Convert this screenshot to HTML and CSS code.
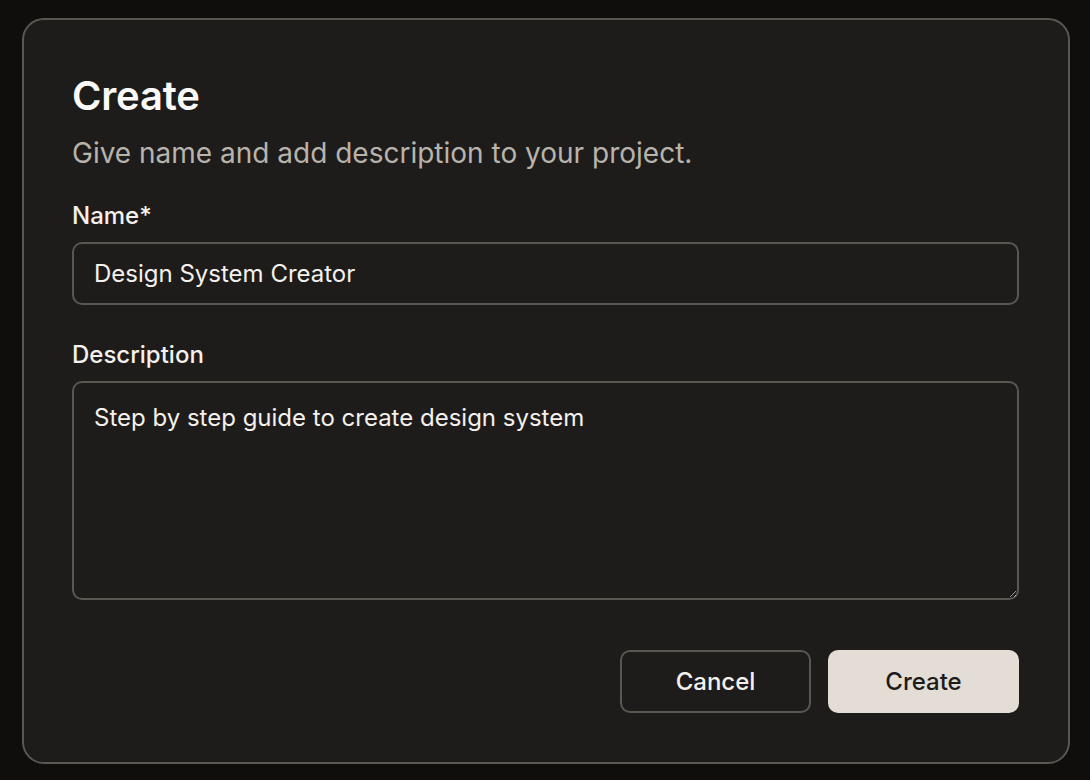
FILE: index.html
```html
<!DOCTYPE html>
<html>
<head lang="en">
    <meta charset="UTF-8">
    <title>Create</title>
    <link rel="stylesheet" href="styles.css">
</head>
<body>
<div class="dialog">
    <h1 class="title">Create</h1>
    <p class="subtitle">Give name and add description to your project.</p>

    <label class="field">
        <span class="label">Name*</span>
        <input class="input" type="text" value="Design System Creator">
    </label>

    <label class="field">
        <span class="label">Description</span>
        <textarea class="input area">Step by step guide to create design system</textarea>
    </label>

    <div class="actions">
        <button class="btn btn-ghost">Cancel</button>
        <button class="btn btn-main">Create</button>
    </div>
</div>
</body>
</html>
```

FILE: styles.css
```css
* {
    margin: 0;
    padding: 0;
    box-sizing: border-box;
}

body {
    background: #0f0e0d;
    font-family: Inter, "Noto Sans", sans-serif;
    color: #f4f1ec;
    padding: 18px 20px 16px 22px;
}

.dialog {
    width: 1048px;
    height: 746px;
    background: #1d1c1b;
    border: 2px solid #5a5650;
    border-radius: 22px;
    padding: 52px 49px 49px 48px;
    display: flex;
    flex-direction: column;
}

.title {
    font-size: 40px;
    font-weight: 600;
    line-height: 48px;
    color: #fbfaf8;
    letter-spacing: -0.2px;
}

.subtitle {
    margin-top: 15px;
    font-size: 28px;
    line-height: 36px;
    color: #b8b3ab;
}

.field {
    display: flex;
    flex-direction: column;
    margin-top: 30px;
}

.field + .field {
    margin-top: 35px;
}

.label {
    font-size: 24px;
    font-weight: 500;
    line-height: 30px;
    color: #f4f1ec;
    margin-bottom: 11px;
}

.input {
    width: 100%;
    height: 63px;
    background: #1d1c1b;
    border: 2px solid #5a5650;
    border-radius: 10px;
    padding: 0 20px;
    font-family: Inter, "Noto Sans", sans-serif;
    font-size: 24px;
    color: #f4f1ec;
    outline: none;
}

.area {
    height: 219px;
    padding: 20px 20px;
    line-height: 30px;
    resize: vertical;
}

.actions {
    margin-top: auto;
    display: flex;
    justify-content: flex-end;
    gap: 17px;
}

.btn {
    width: 191px;
    height: 63px;
    border-radius: 10px;
    font-family: Inter, "Noto Sans", sans-serif;
    font-size: 24px;
    font-weight: 500;
    cursor: pointer;
}

.btn-ghost {
    background: #1d1c1b;
    border: 2px solid #5a5650;
    color: #f4f1ec;
}

.btn-main {
    background: #e3ddd6;
    border: 2px solid #e3ddd6;
    color: #1d1c1b;
}
```
